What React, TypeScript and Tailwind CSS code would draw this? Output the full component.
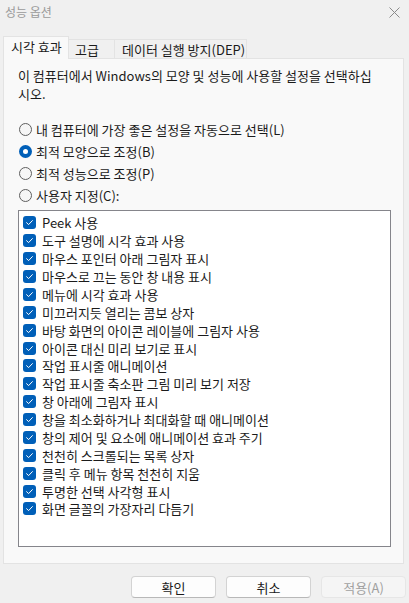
import { useState } from 'react';

const effects = [
  'Peek 사용',
  '도구 설명에 시각 효과 사용',
  '마우스 포인터 아래 그림자 표시',
  '마우스로 끄는 동안 창 내용 표시',
  '메뉴에 시각 효과 사용',
  '미끄러지듯 열리는 콤보 상자',
  '바탕 화면의 아이콘 레이블에 그림자 사용',
  '아이콘 대신 미리 보기로 표시',
  '작업 표시줄 애니메이션',
  '작업 표시줄 축소판 그림 미리 보기 저장',
  '창 아래에 그림자 표시',
  '창을 최소화하거나 최대화할 때 애니메이션',
  '창의 제어 및 요소에 애니메이션 효과 주기',
  '천천히 스크롤되는 목록 상자',
  '클릭 후 메뉴 항목 천천히 지움',
  '투명한 선택 사각형 표시',
  '화면 글꼴의 가장자리 다듬기',
];

const modes = [
  '내 컴퓨터에 가장 좋은 설정을 자동으로 선택(L)',
  '최적 모양으로 조정(B)',
  '최적 성능으로 조정(P)',
  '사용자 지정(C):',
];

function Radio({ checked }: { checked: boolean }) {
  if (checked) {
    return (
      <span className="flex h-[13px] w-[13px] items-center justify-center rounded-full bg-[#005fb8]">
        <span className="h-[5px] w-[5px] rounded-full bg-white" />
      </span>
    );
  }
  return <span className="h-[13px] w-[13px] rounded-full border border-[#5f5f5f] bg-[#f6f6f6]" />;
}

function CheckBox() {
  return (
    <span className="flex h-[13px] w-[13px] items-center justify-center rounded-[3px] bg-[#005fb8]">
      <svg width="13" height="13" viewBox="0 0 13 13" fill="none">
        <path d="M3.6 6.7 L5.6 8.6 L9.4 4.6" stroke="white" strokeWidth="1" strokeLinecap="round" strokeLinejoin="round" />
      </svg>
    </span>
  );
}

export default function App() {
  const [mode] = useState(1);

  return (
    <div
      className="flex h-[603px] w-[409px] flex-col bg-[#f0f0f0] text-[12px] text-[#1b1b1b]"
      style={{ fontFamily: '"Noto Sans CJK KR", "Noto Sans", sans-serif' }}
    >
      {/* title bar */}
      <div className="flex h-[24px] items-center justify-between pl-[5px] pr-[9px]">
        <span className="text-[#9a9a9a] leading-none">성능 옵션</span>
        <svg width="11" height="11" viewBox="0 0 11 11">
          <path d="M0.5 0.5 L10.5 10.5 M10.5 0.5 L0.5 10.5" stroke="#8a8a8a" strokeWidth="1" />
        </svg>
      </div>

      {/* tabs */}
      <div className="mt-[12px] flex h-[22px] items-end pl-[3px]">
        <div className="relative z-10 mb-[-1px] flex h-[23px] w-[66px] items-start border border-b-0 border-[#e3e3e3] bg-[#f9f9f9] pl-[7px] pt-[2px] text-[13px] leading-[16px]">
          시각 효과
        </div>
        <div className="flex h-[19px] w-[46px] items-center border-t border-r border-[#e3e3e3] bg-[#f0f0f0] pl-[6px] text-[13px] leading-none">
          고급
        </div>
        <div className="flex h-[19px] w-[132px] items-center border-t border-r border-[#e3e3e3] bg-[#f0f0f0] pl-[7px] text-[13px] leading-none">
          데이터 실행 방지(DEP)
        </div>
      </div>

      {/* panel */}
      <div className="ml-[3px] flex h-[506px] w-[401px] flex-col border border-[#e3e3e3] bg-[#f9f9f9] pl-[14px] pt-[8px]">
        <p className="leading-[18px] text-[13px] whitespace-nowrap">
          이 컴퓨터에서 Windows의 모양 및 성능에 사용할 설정을 선택하십
          <br />
          시오.
        </p>

        <div className="mt-[15px] flex flex-col">
          {modes.map((m, i) => (
            <label key={m} className="flex h-[22px] items-center gap-[4px] pl-[1px] text-[13px]">
              <Radio checked={i === mode} />
              <span className="leading-none">{m}</span>
            </label>
          ))}
        </div>

        <div className="mt-[4px] h-[337px] w-[373px] border border-[#85858b] bg-white pt-[3px] pl-[4px]">
          {effects.map((e) => (
            <div key={e} className="flex h-[17.875px] items-center gap-[6px] text-[13px]">
              <CheckBox />
              <span className="leading-none">{e}</span>
            </div>
          ))}
        </div>
      </div>

      {/* buttons */}
      <div className="mt-[12px] flex justify-end gap-[10px] pr-[3px]">
        <button className="h-[22px] w-[85px] rounded-[4px] border border-[#d3d3d3] border-b-[#b8b8b8] bg-[#fdfdfd] text-[13px] leading-none">
          확인
        </button>
        <button className="h-[22px] w-[85px] rounded-[4px] border border-[#d3d3d3] border-b-[#b8b8b8] bg-[#fdfdfd] text-[13px] leading-none">
          취소
        </button>
        <button className="h-[22px] w-[85px] rounded-[4px] border border-[#e6e6e6] bg-[#f5f5f5] text-[13px] leading-none text-[#a0a0a0]">
          적용(A)
        </button>
      </div>
    </div>
  );
}
